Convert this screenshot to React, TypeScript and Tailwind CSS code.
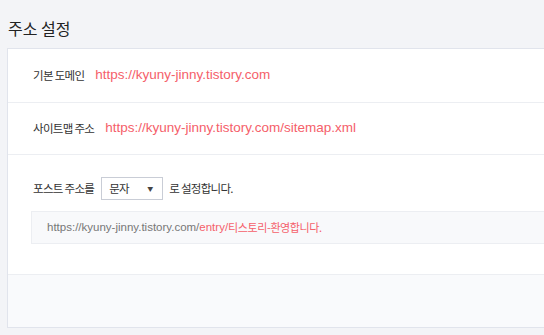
const ko = "font-['Noto_Sans_CJK_KR',sans-serif] text-[11.5px] tracking-[-0.7px]";
const en = "font-['Liberation_Sans','Noto_Sans_CJK_KR',sans-serif]";

function Row({ label, url, h }: { label: string; url: string; h: string }) {
  return (
    <div className={`flex items-center ${h} pl-[25px] border-b border-[#eceef2]`}>
      <span className={`${ko} text-[#333]`}>{label}</span>
      <span className={`${en} ml-[11px] text-[13.5px] text-[#f5606a]`}>{url}</span>
    </div>
  );
}

export default function App() {
  return (
    <div className="w-[544px] h-[335px] overflow-hidden bg-[#f3f4f7] pl-[7px]">
      <div className="h-[48px] flex items-center pl-[1px] pt-[7px] font-['Noto_Sans_CJK_KR',sans-serif] text-[16px] text-[#222]">
        주소 설정
      </div>
      <div className="w-[600px] border border-[#e1e4ec] bg-white">
        <Row label="기본 도메인" url="https://kyuny-jinny.tistory.com" h="h-[54px]" />
        <Row label="사이트맵 주소" url="https://kyuny-jinny.tistory.com/sitemap.xml" h="h-[52px]" />
        <div className="h-[120px] pl-[23px] pt-[22px] border-b border-[#eceef2]">
          <div className={`flex items-center pl-[2px] ${ko} text-[#333]`}>
            <span>포스트 주소를</span>
            <div className="ml-[7px] flex items-center justify-between w-[62px] h-[23px] border border-[#c9cdd6] pl-[7px] pr-[9px]">
              <span>문자</span>
              <span className="text-[6px] tracking-normal text-[#444]">▼</span>
            </div>
            <span className="ml-[6px]">로 설정합니다.</span>
          </div>
          <div className="mt-[11px] h-[33px] flex items-center pl-[15px] bg-[#f8f9fb] border border-[#eceef2] text-[#777]">
            <span className={`${en} text-[11.5px]`}>https://kyuny-jinny.tistory.com/</span>
            <span className={`${en} text-[11.5px] text-[#f5606a]`}>entry/</span>
            <span className="font-['Noto_Sans_CJK_KR',sans-serif] text-[11px] tracking-[-0.4px] text-[#f5606a]">티스토리-환영합니다.</span>
          </div>
        </div>
        <div className="h-[52px] bg-[#f9fafc]" />
      </div>
    </div>
  );
}
